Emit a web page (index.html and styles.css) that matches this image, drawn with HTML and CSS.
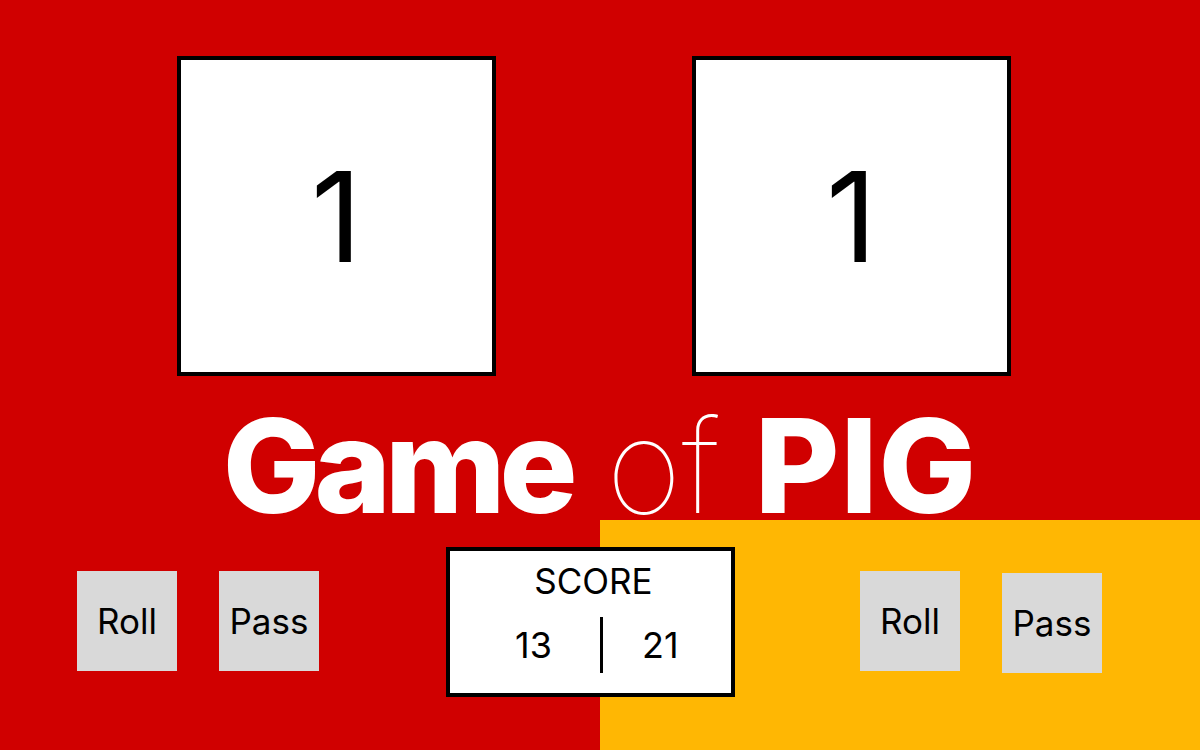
FILE: index.html
```html
<!DOCTYPE html>
<html lang="en">
<head>
<meta charset="utf-8">
<title>Game of PIG</title>
<link rel="stylesheet" href="styles.css">
</head>
<body>
<main class="game">
  <section class="dice">
    <div class="die"><span class="face">1</span></div>
    <div class="die"><span class="face">1</span></div>
  </section>
  <h1 class="title"><span class="bold tight">Game</span> <span class="thin">of</span> <span class="bold">PIG</span></h1>
  <section class="board">
    <div class="player player-one">
      <button class="btn">Roll</button>
      <button class="btn">Pass</button>
    </div>
    <div class="score">
      <div class="score-title">SCORE</div>
      <div class="score-row">
        <span class="num num-left">13</span>
        <span class="divider"></span>
        <span class="num num-right">21</span>
      </div>
    </div>
    <div class="player player-two">
      <button class="btn">Roll</button>
      <button class="btn nudge">Pass</button>
    </div>
  </section>
</main>
</body>
</html>
```

FILE: styles.css
```css
html, body {
  margin: 0;
  padding: 0;
}

body {
  width: 1200px;
  height: 750px;
  overflow: hidden;
  background: #d00000;
  font-family: Inter, "Noto Sans", "Liberation Sans", sans-serif;
  color: #000;
}

.game {
  display: flex;
  flex-direction: column;
  height: 750px;
}

.dice {
  display: flex;
  gap: 196px;
  padding: 56px 0 0 177px;
}

.die {
  width: 319px;
  height: 320px;
  box-sizing: border-box;
  border: 4px solid #000;
  background: #fff;
  display: flex;
  align-items: center;
  justify-content: center;
}

.face {
  font-size: 125px;
  line-height: 1;
  font-weight: 400;
}

.title {
  margin: 0;
  height: 144px;
  box-sizing: border-box;
  padding-top: 25px;
  line-height: 130px;
  font-size: 130px;
  text-align: center;
  color: #fff;
  white-space: nowrap;
  word-spacing: 4px;
}

.bold {
  font-weight: 800;
  letter-spacing: 1px;
}

.tight {
  letter-spacing: -6px;
}

.thin {
  font-weight: 100;
  letter-spacing: 0;
}

.board {
  flex: 1;
  display: flex;
  align-items: flex-start;
  box-sizing: border-box;
  padding: 27px 0 0 77px;
  background: linear-gradient(to right, #d00000 50%, #ffb703 50%);
}

.player {
  display: flex;
  align-items: flex-start;
  gap: 42px;
  margin-top: 24px;
}

.player-two {
  margin-left: 125px;
}

.btn {
  width: 100px;
  height: 100px;
  padding: 0;
  border: none;
  background: #d9d9d9;
  font-family: Inter, "Noto Sans", "Liberation Sans", sans-serif;
  font-size: 35px;
  color: #000;
}

.nudge {
  margin-top: 2px;
}

.score {
  margin-left: 127px;
  width: 289px;
  height: 150px;
  box-sizing: border-box;
  border: 4px solid #000;
  background: #fff;
  padding-top: 13px;
}

.score-title {
  font-size: 35px;
  line-height: 1;
  text-align: center;
  padding-left: 6px;
}

.score-row {
  margin-top: 18px;
  display: grid;
  grid-template-columns: 1fr 3px 1fr;
  align-items: center;
  padding-left: 22px;
}

.num {
  font-size: 36px;
  line-height: 1;
}

.num-left {
  text-align: right;
  padding-right: 48px;
}

.num-right {
  text-align: left;
  padding-left: 39px;
}

.divider {
  width: 3px;
  height: 56px;
  background: #000;
}
```
